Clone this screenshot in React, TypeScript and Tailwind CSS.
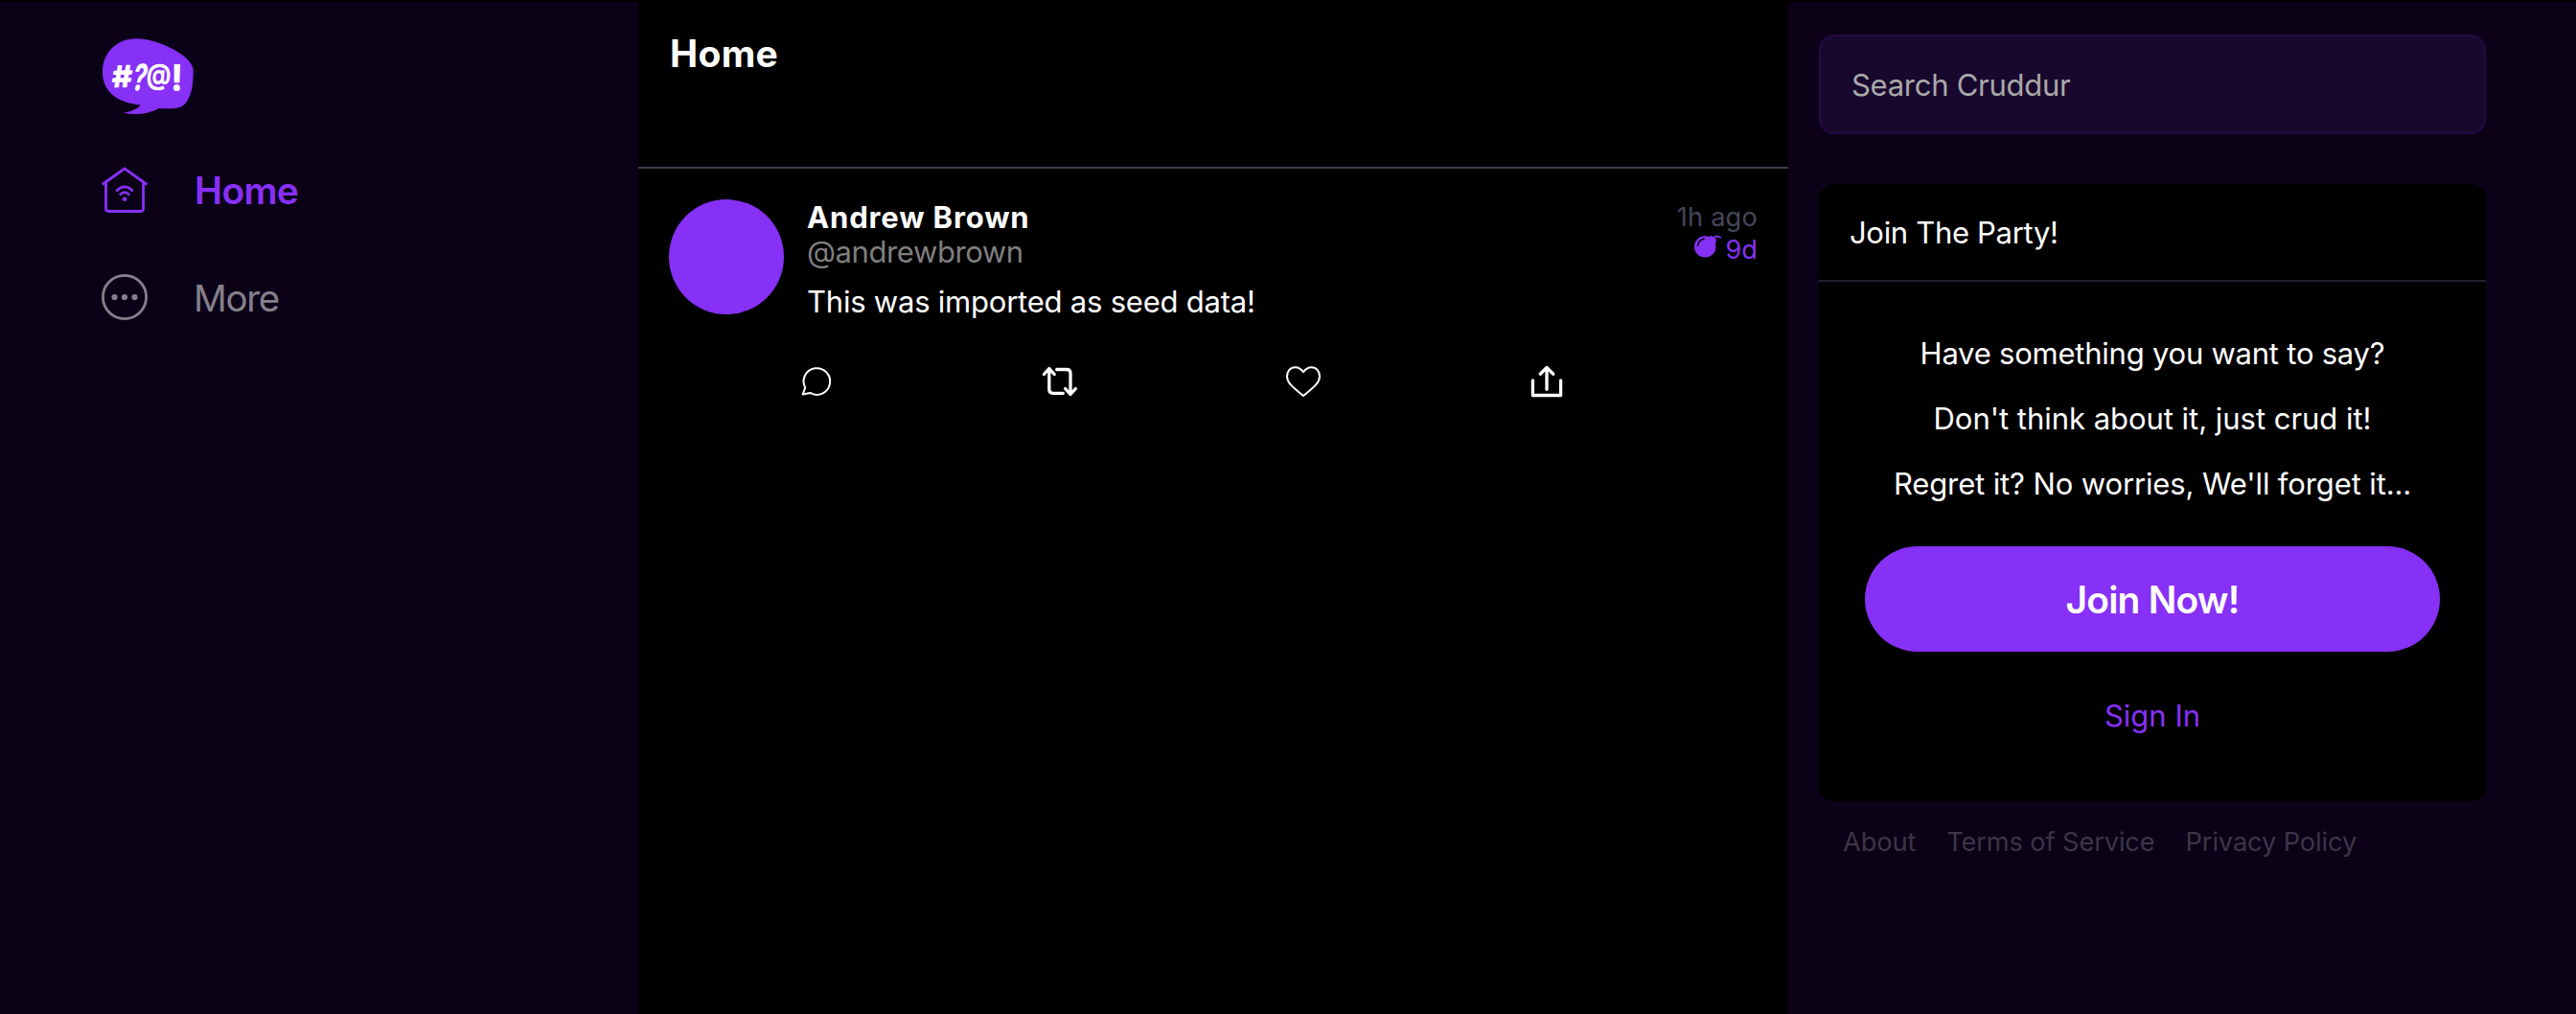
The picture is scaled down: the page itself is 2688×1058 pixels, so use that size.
import React from "react";

function Logo() {
  return (
    <svg width="100" height="88" viewBox="104 36 100 88" className="ml-[104px] block">
      <path
        fill="#8730f6"
        d="M147 109.800C119 106.500 107 93.500 107 75C107 55 122 40.300 142 40.300C165 40.300 201.700 58.500 201.700 73.500C201.700 90 199.500 100 193.500 108C189 113 181 114 166 113C154 119 143 120.600 128.500 117.700C137 116.500 143 114 147 109.800Z"
      />
      <g fill="#fff" stroke="#fff" strokeWidth="0.800" strokeLinejoin="round" fontFamily="Inter, sans-serif" fontWeight="700">
        <text transform="translate(117 91) rotate(-1) scale(1.07 1)" fontSize="31">#</text>
        <text transform="translate(136.500 94) skewX(-12) scale(0.7 1)" fontSize="37" fontWeight="600">?</text>
        <text transform="translate(152.300 88) skewX(-4) scale(0.88 1)" fontSize="29.500" fontWeight="500">@</text>
        <text transform="translate(178.600 94.300) rotate(1) scale(0.930 1)" fontSize="37">!</text>
      </g>
    </svg>
  );
}

function HomeIcon() {
  return (
    <svg width="48" height="48" viewBox="0 0 48 48" fill="none" stroke="currentColor" strokeWidth="2.800" strokeLinejoin="round">
      <path d="M0.800 18.500L24 1.800L47.200 18.500" />
      <path d="M4.500 16.500V43.500Q4.500 46.500 7.500 46.500H40.500Q43.500 46.500 43.500 43.500V16.500" />
      <path d="M16 24.800Q24 17 32 24.800M19.600 28.800Q24 24.600 28.400 28.800" strokeWidth="2.600" strokeLinecap="round" />
      <circle cx="24" cy="33.800" r="2.300" fill="currentColor" stroke="none" />
    </svg>
  );
}

function MoreIcon() {
  return (
    <svg width="48" height="48" viewBox="0 0 48 48" fill="currentColor">
      <circle cx="24" cy="24" r="22.600" fill="none" stroke="currentColor" strokeWidth="2.800" />
      <circle cx="13.500" cy="24" r="3.100" />
      <circle cx="24" cy="24" r="3.100" />
      <circle cx="34.500" cy="24" r="3.100" />
    </svg>
  );
}

function BombIcon() {
  return (
    <svg width="28" height="24" viewBox="0 0 28 24" fill="none" className="-mt-[8px]">
      <circle cx="11.200" cy="12.400" r="11.200" fill="currentColor" />
      <path d="M15.500 2.500L17.500 0.800L20.200 2.200L23 5L22.500 8L20 9Z" fill="currentColor" />
      <path d="M20 3.500Q21.500 0.800 24 1.600T27.300 2.800" stroke="currentColor" strokeWidth="1.800" strokeLinecap="round" />
      <path d="M3.600 11.200Q4.200 5.600 10 4.200" stroke="#000" strokeWidth="1.600" strokeLinecap="round" />
    </svg>
  );
}

function ActionIcon({ thin, children }: { thin?: boolean; children: React.ReactNode }) {
  return (
    <svg width="40" height="40" viewBox="0 0 40 40" fill="none" stroke="currentColor" strokeWidth={thin ? 2 : 3.3} strokeLinecap="round" strokeLinejoin="round">
      {children}
    </svg>
  );
}

function Sidebar() {
  return (
    <nav className="w-[666px] bg-[#0b0218] pt-[34px]">
      <Logo />
      <div className="mt-[50px] ml-[106px] flex flex-col gap-16">
        <a className="flex h-12 items-center gap-12 text-[#8730f6]">
          <HomeIcon />
          <span className="pt-[2px] pl-px text-[39px] leading-[48px] font-semibold tracking-[-0.700px]">Home</span>
        </a>
        <a className="flex h-12 items-center gap-12 text-[#85808b]">
          <MoreIcon />
          <span className="pt-[2px] text-[38.500px] leading-[48px] tracking-[-1.300px]">More</span>
        </a>
      </div>
    </nav>
  );
}

function Feed() {
  return (
    <main className="w-[1200px]">
      <header className="h-[174px] border-b-2 border-[#3b3b4f] pt-[30px] pl-[33px]">
        <h1 className="text-[39px] leading-[48px] font-bold tracking-[0.300px]">Home</h1>
      </header>
      <article className="px-8 pt-8">
        <div className="flex">
          <div className="size-[120px] rounded-full bg-[#8730f6]" />
          <div className="ml-[24px] flex-1 pt-px text-[31px] leading-9">
            <div className="font-bold tracking-[0.860px]">Andrew Brown</div>
            <div className="tracking-[-0.400px] text-[#7f7f7f]">@andrewbrown</div>
            <p className="mt-4 tracking-[-0.220px]">This was imported as seed data!</p>
          </div>
          <div className="flex flex-col items-end pt-[2px] text-[27.200px] leading-[34px]">
            <div className="tracking-[0.200px] text-[#46465a]">1h ago</div>
            <div className="flex items-center gap-1 text-[#8730f6]">
              <BombIcon />
              <span>9d</span>
            </div>
          </div>
        </div>
        <div className="mt-[45px] ml-[134px] flex gap-[214px]">
          <ActionIcon thin>
            <path d="M5.600 33.600L8.200 26.500A13.800 13.800 0 1 1 13.400 31.900Z" />
          </ActionIcon>
          <ActionIcon>
            <path d="M3.400 12.500L8.800 6.500L14.200 12.500M8.800 7V28.300Q8.800 32.300 12.800 32.300H23.300" />
            <path d="M16.700 7.500H27Q31 7.500 31 11.500V33M25.600 27.500L31 33.500L36.400 27.500" />
          </ActionIcon>
          <ActionIcon thin>
            <path d="M20 10.300C17.500 6.500 14.500 5.200 11.500 5.200C6.500 5.200 3 9.300 3 15C3 20.500 7 24.500 20 35C33 24.500 37 20.500 37 15C37 9.300 33.500 5.200 28.500 5.200C25.500 5.200 22.500 6.500 20 10.300Z" />
          </ActionIcon>
          <ActionIcon>
            <path d="M5.400 19V34.500H34.600V19M20 5.500V28.300M13.200 12.200L20 5.500L26.800 12.200" />
          </ActionIcon>
        </div>
      </article>
    </main>
  );
}

function JoinPanel() {
  return (
    <section className="mt-[52px] h-[644px] overflow-hidden rounded-2xl bg-black">
      <h2 className="flex h-[102px] items-center border-b-2 border-[#21212d] pt-[2px] pl-8 text-[31px] tracking-[-0.320px]">Join The Party!</h2>
      <div className="flex flex-col items-center pt-[57px] text-[31px] leading-9">
        <p className="tracking-[-0.230px]">Have something you want to say?</p>
        <p className="mt-8 tracking-[-0.030px]">Don't think about it, just crud it!</p>
        <p className="mt-8 tracking-[-0.120px]">Regret it? No worries, We'll forget it...</p>
        <button className="mt-[47px] h-[110px] w-[600px] rounded-full bg-[#8730f6] pt-[2px] text-[39px] leading-[48px] font-semibold tracking-[-0.800px]">
          Join Now!
        </button>
        <a className="mt-[49px] text-[#8730f6]">Sign In</a>
      </div>
    </section>
  );
}

function RightRail() {
  return (
    <aside className="flex-1 bg-[#0b0218] pt-[34px] pl-8">
      <div className="w-[696px]">
        <input
          placeholder="Search Cruddur"
          className="block h-[104px] w-full rounded-2xl border-2 border-[#240a44] bg-[#19082e] px-8 pt-px text-[31px] tracking-[-0.270px] placeholder:text-[#a9a9a9]"
        />
        <JoinPanel />
        <footer className="mt-[27px] flex gap-8 pl-[25px] text-[27.200px] leading-8 tracking-[-0.100px] text-[#3c3546]">
          <a>About</a>
          <a>Terms of Service</a>
          <a>Privacy Policy</a>
        </footer>
      </div>
    </aside>
  );
}

export default function App() {
  return (
    <div className="flex h-[1058px] w-[2688px] bg-black pt-[2px] font-['Inter',sans-serif] text-white">
      <Sidebar />
      <Feed />
      <RightRail />
    </div>
  );
}
